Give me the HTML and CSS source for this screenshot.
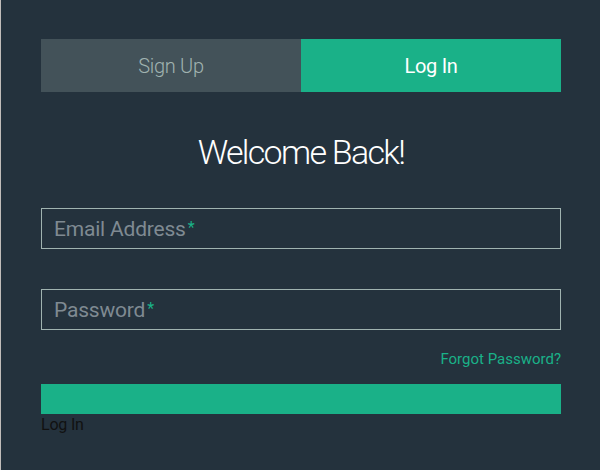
FILE: index.html
```html
<!DOCTYPE html>
<html lang="en">
  <head>
    <meta charset="UTF-8" />
    <meta name="viewport" content="width=device-width, initial-scale=1.0" />
    <title>Log In</title>
    <link rel="stylesheet" href="styles.css">
  </head>
  <body>
    <div class="form">
      <ul class="tab-group">
        <li class="tab"><a href="#signup">Sign Up</a></li>
        <li class="tab active"><a href="#login">Log In</a></li>
      </ul>

      <div id="login">
        <h1>Welcome Back!</h1>
        <form>
          <div class="field-wrap">
            <label for="email">Email Address<span class="req">*</span></label>
            <input id="email" type="email" required autocomplete="off" />
          </div>
          <div class="field-wrap">
            <label for="password">Password<span class="req">*</span></label>
            <input id="password" type="password" required autocomplete="off" />
          </div>
          <p class="forgot"><a href="#">Forgot Password?</a></p>
          <button class="button" type="submit"></button>
          <span class="button-text">Log In</span>
        </form>
      </div>
    </div>
  </body>
</html>
```

FILE: styles.css
```css
* {
  margin: 0;
  padding: 0;
  box-sizing: border-box;
}

html {
  overflow: hidden;
}

body {
  background: #c1bdba;
  font-family: Roboto, "Liberation Sans", sans-serif;
}

a {
  text-decoration: none;
  color: #1ab188;
}

.form {
  background: #24323d;
  width: 600px;
  min-height: 470px;
  margin-left: 1px;
  padding: 39px 40px;
}

.tab-group {
  list-style: none;
  display: flex;
  margin-bottom: 40px;
}

.tab {
  flex: 1;
}

.tab a {
  display: block;
  height: 53px;
  line-height: 54px;
  text-align: center;
  font-size: 20px;
  font-weight: 300;
  letter-spacing: -0.3px;
  background: #435259;
  color: #a0b3b0;
}

.tab.active a {
  background: #1ab188;
  color: #ffffff;
  font-weight: 400;
}

h1 {
  text-align: center;
  color: #ffffff;
  font-weight: 300;
  font-size: 34px;
  letter-spacing: -1.7px;
  line-height: 40px;
  margin-bottom: 36px;
}

.field-wrap {
  position: relative;
  margin-bottom: 40px;
}

.field-wrap label {
  position: absolute;
  left: 13px;
  top: 50%;
  transform: translateY(-50%);
  font-size: 21px;
  letter-spacing: -0.2px;
  color: #7f8a92;
  pointer-events: none;
}

.req {
  margin-left: 2px;
  font-size: 16px;
  vertical-align: 3px;
  color: #1ab188;
}

input {
  display: block;
  width: 100%;
  height: 41px;
  background: none;
  border: 1px solid #a0b3b0;
  border-radius: 0;
  color: #ffffff;
  font-size: 21px;
  padding: 5px 12px;
  outline: none;
}

.forgot {
  text-align: right;
  margin-top: -20px;
  font-size: 15px;
  line-height: 18px;
  margin-bottom: 16px;
}

.button {
  display: block;
  width: 100%;
  height: 30px;
  border: none;
  background: #1ab188;
}

.button-text {
  display: block;
  font-size: 16px;
  line-height: 21px;
  color: #111111;
  letter-spacing: -0.2px;
}
```
